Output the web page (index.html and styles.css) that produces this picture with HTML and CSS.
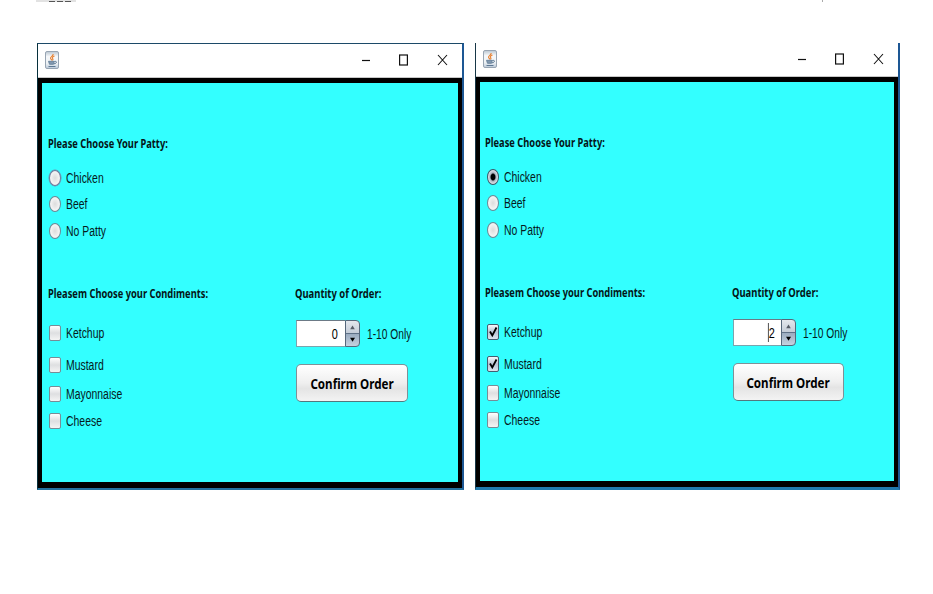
FILE: index.html
```html
<!DOCTYPE html>
<html lang="en">
<head>
<meta charset="utf-8">
<title>Burger order</title>
<link rel="stylesheet" href="styles.css">
</head>
<body>
<svg class="defs" width="0" height="0" aria-hidden="true">
  <defs>
    <linearGradient id="tile" x1="0" y1="0" x2="0" y2="1"><stop offset="0" stop-color="#b9c5d0"/><stop offset=".3" stop-color="#f6f8fa"/><stop offset=".7" stop-color="#eef2f5"/><stop offset="1" stop-color="#b9c8d8"/></linearGradient>
    <symbol id="java" viewBox="0 0 14 18">
      <rect x=".5" y=".5" width="13" height="17" rx="1.5" fill="url(#tile)" stroke="#98a5b3"/>
      <path d="M8.2 3C8.500 5 5.200 5.600 5.500 7.300 5.600 8.200 7 8.800 7 9.500M9.500 5C7.300 6 6.900 6.700 7.700 7.600 8.200 8.300 7.900 9 7.500 9.300" fill="none" stroke="#e78235" stroke-width="1.100"/>
      <path d="M3.500 10.300H9.300L8.500 13.300H4.500Z" fill="#8299b0" stroke="#5d7893" stroke-width=".8"/>
      <path d="M9.500 10.500C12.400 9.700 12 12.600 9 12.800M3.500 15.500H10.500" fill="none" stroke="#5d7893"/>
    </symbol>
    <symbol id="controls" viewBox="0 0 90 16">
      <path d="M2 8.500H10" stroke="#111" stroke-width="1.200"/>
      <rect x="39.600" y="3" width="7.800" height="10" fill="none" stroke="#111" stroke-width="1.200"/>
      <path d="M78 3L87 13M87 3L78 13" stroke="#111" stroke-width="1.100"/>
    </symbol>
    <symbol id="tick" viewBox="0 0 12 16"><path d="M3 7.500L5.300 11.500 9.500 3.500" fill="none" stroke="#000" stroke-width="1.800"/></symbol>
    <symbol id="arrows" viewBox="0 0 13 25"><path d="M4.200 8.300L6.500 4.500 8.800 8.300Z" fill="#555b66"/><path d="M4 16.700H9L6.500 20.700Z" fill="#000"/></symbol>
  </defs>
</svg>
<div class="cutoff"><span class="stub"><i></i><i></i><i></i></span><span class="speck"></span></div>
<main class="desktop">
  <section class="window first">
    <header class="titlebar"><svg class="java"><use href="#java"/></svg><svg class="controls"><use href="#controls"/></svg></header>
    <form class="panel">
      <div class="choices">
        <h2 class="patty">Please Choose Your Patty:</h2>
        <label class="row r1"><span class="radio focus"></span><span class="text">Chicken</span></label>
        <label class="row r2"><span class="radio"></span><span class="text">Beef</span></label>
        <label class="row r3"><span class="radio"></span><span class="text">No Patty</span></label>
        <h2 class="condiments">Pleasem Choose your Condiments:</h2>
        <label class="row c1"><span class="check"></span><span class="text">Ketchup</span></label>
        <label class="row c2"><span class="check"></span><span class="text">Mustard</span></label>
        <label class="row c3"><span class="check"></span><span class="text">Mayonnaise</span></label>
        <label class="row c4"><span class="check"></span><span class="text">Cheese</span></label>
      </div>
      <div class="order">
        <h2 class="quantity">Quantity of Order:</h2>
        <div class="amount"><span class="spinner"><span class="value"><span class="digit">0</span></span><svg class="arrows"><use href="#arrows"/></svg></span><span class="text">1-10 Only</span></div>
        <button type="button" class="confirm"><span>Confirm Order</span></button>
      </div>
    </form>
  </section>
  <section class="window second">
    <header class="titlebar"><svg class="java"><use href="#java"/></svg><svg class="controls"><use href="#controls"/></svg></header>
    <form class="panel">
      <div class="choices">
        <h2 class="patty">Please Choose Your Patty:</h2>
        <label class="row r1"><span class="radio on"></span><span class="text">Chicken</span></label>
        <label class="row r2"><span class="radio"></span><span class="text">Beef</span></label>
        <label class="row r3"><span class="radio"></span><span class="text">No Patty</span></label>
        <h2 class="condiments">Pleasem Choose your Condiments:</h2>
        <label class="row c1"><span class="check on"><svg><use href="#tick"/></svg></span><span class="text">Ketchup</span></label>
        <label class="row c2"><span class="check on"><svg><use href="#tick"/></svg></span><span class="text">Mustard</span></label>
        <label class="row c3"><span class="check"></span><span class="text">Mayonnaise</span></label>
        <label class="row c4"><span class="check"></span><span class="text">Cheese</span></label>
      </div>
      <div class="order">
        <h2 class="quantity">Quantity of Order:</h2>
        <div class="amount"><span class="spinner"><span class="value caret"><span class="digit">2</span></span><svg class="arrows"><use href="#arrows"/></svg></span><span class="text">1-10 Only</span></div>
        <button type="button" class="confirm"><span>Confirm Order</span></button>
      </div>
    </form>
  </section>
</main>
</body>
</html>
```

FILE: styles.css
```css
* { box-sizing: border-box; }
body { margin: 0; background: #fff; font-family: "Liberation Sans", sans-serif; color: #061a1c; overflow: hidden; }
.defs { position: absolute; }
.cutoff { display: flex; height: 43px; padding-left: 36px; align-items: flex-start; }
.stub { display: flex; gap: 2px; width: 40px; height: 2px; padding: 1px 0 0 13px; background: #e2e2e2; }
.stub i { width: 6px; height: 1px; background: #555; }
.speck { width: 1px; height: 2px; margin-left: 746px; background: #aaa; }
.desktop { display: flex; align-items: flex-start; gap: 11px; padding-left: 37px; }
.window { display: flex; flex-direction: column; height: 447px; border-style: solid; }
.first { width: 427px; border-width: 1px 2px 2px 1px; border-color: #1c4a68 #1d5794 #24729f #06303c; }
.second { width: 425px; border-width: 0 2px 3px 1px; border-color: #fff #1d5794 #207aae #173747; }
.titlebar { display: flex; justify-content: space-between; align-items: center; height: 34px; padding: 0 12px 0 7px; background: #fff; border-bottom: 1px solid #c8c8c8; }
.java { width: 14px; height: 18px; margin-bottom: 2px; }
.controls { width: 90px; height: 16px; margin-bottom: 1px; }
.panel { flex: 1; display: flex; background: #3ff; border: solid #000; border-width: 5px 4px 6px 4px; }
.choices { width: 253px; padding: 51px 0 0 5.500px; }
.second .choices { width: 252px; padding-left: 5px; }
.order { padding-top: 201px; }
h2 { height: 20px; margin: 0; font: bold 13px/18px "Noto Sans", sans-serif; white-space: nowrap; transform: scaleX(.716); transform-origin: left; color: #041517; }
.quantity { transform: scaleX(.727); }
.row { display: flex; align-items: center; height: 20px; }
.text { font-size: 14px; line-height: 20px; white-space: nowrap; transform: scaleX(.73); transform-origin: left; }
.row .text { transform: scaleX(.745); }
.r1 { margin-top: 14px; }
.r2 { margin-top: 6px; }
.r3 { margin-top: 7px; }
.condiments { margin-top: 43px; }
.c1 { margin-top: 19px; }
.c2 { margin-top: 12px; }
.c3 { margin-top: 9px; }
.c4 { margin-top: 7px; }
.radio { width: 12px; height: 16px; margin: 0 5px 0 1.500px; border: 1px solid #708895; border-radius: 50%; background: radial-gradient(#dcdcdc, #f3f3f3 60%, #dce4e8); }
.radio.focus { border-color: #77789b; box-shadow: 0 0 0 .5px #6f8fae; }
.radio.on { border-color: #3d5668; background: radial-gradient(ellipse, #000 0 28%, #a9b2bf 42%, #eef1f5 75%); }
.check { width: 12px; height: 16px; margin: 0 5px 0 1.500px; border: 1px solid #788c96; border-radius: 2px; background: linear-gradient(#fff, #dedfe1 50%, #f4f4f4); }
.check.on { border-color: #455c70; background: linear-gradient(#f7f9fb, #b7c3d3 50%, #dce4ed); }
.check svg { display: block; width: 12px; height: 16px; margin: -1px; }
.amount { display: flex; align-items: center; height: 27px; margin: 16px 0 0 1px; }
.spinner { display: flex; width: 64px; height: 27px; margin-right: 7px; }
.second .spinner { width: 63px; }
.value { flex: 1; display: flex; align-items: center; justify-content: flex-end; padding-right: 7px; background: #fff; border: 1px solid #7aa4ad; border-top-color: #6c7a86; border-right: 0; font-size: 14px; color: #000; }
.caret { padding-right: 6px; }
.digit { transform: scaleX(.78); transform-origin: right; }
.caret .digit { border-left: 1px solid #222; height: 19px; line-height: 20px; }
.arrows { width: 15px; height: 27px; border: 1px solid #56677b; border-radius: 0 4px 4px 0; background: linear-gradient(#e3e7ed, #c6ced9 46%, #5f7187 47% 51%, #9aabbf 52%, #c6d2e0); }
.confirm { display: flex; align-items: center; justify-content: center; width: 112px; height: 38px; margin: 17px 0 0 1px; padding: 0; border: 1px solid #7e9197; border-bottom-color: #54777d; border-radius: 5px; background: linear-gradient(#fff, #efefef 50%, #e4e4e4 65%, #f3f3f3); color: #000; font: bold 14.500px "Noto Sans", sans-serif; white-space: nowrap; }
.second .confirm { width: 111px; }
.confirm span { transform: scaleX(.8); }
```
